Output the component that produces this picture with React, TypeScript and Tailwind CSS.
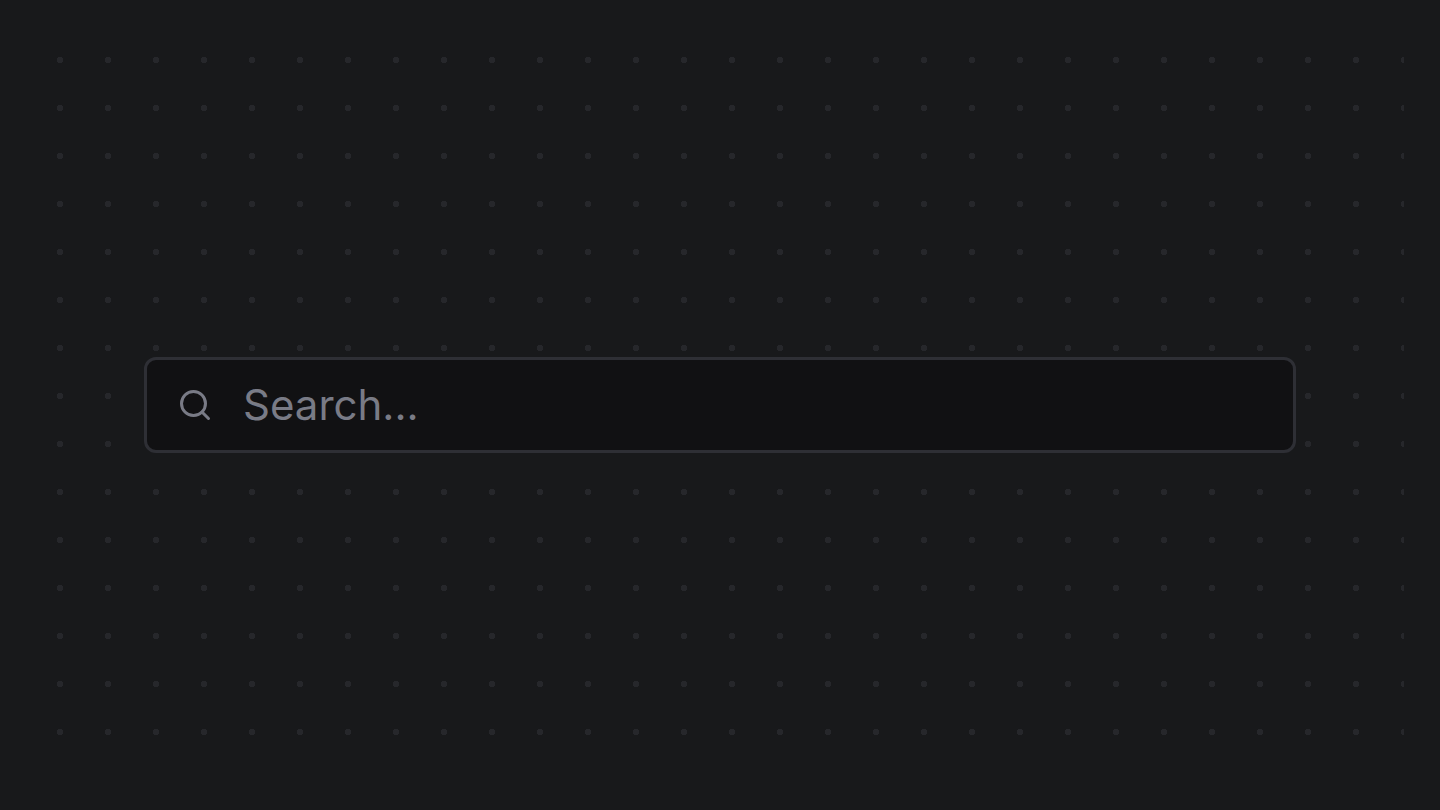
import { Search } from "lucide-react";

export default function App() {
  return (
    <div className="min-h-screen bg-[#18191b] p-9 flex font-[Inter,sans-serif]">
      <main className="flex-1 flex items-center justify-center px-27 bg-[radial-gradient(circle,#26272b_3px,transparent_3px)] bg-size-[48px_48px]">
        <label className="w-full h-24 flex items-center gap-[30px] px-[30px] rounded-xl border-3 border-[#2e2f35] bg-[#111113]">
          <Search className="size-9 shrink-0 text-[#797b86]" strokeWidth={2} aria-hidden="true" />
          <input
            type="search"
            aria-label="Search"
            placeholder="Search..."
            className="flex-1 min-w-0 h-12 pb-0.5 bg-transparent text-[42px] text-[#edeef0] placeholder:text-[#797b86] outline-none"
          />
        </label>
      </main>
    </div>
  );
}
